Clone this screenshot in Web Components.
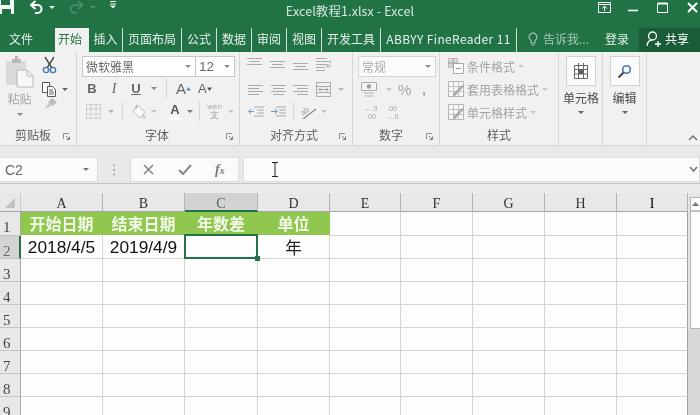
<!DOCTYPE html>
<html lang="zh"><head><meta charset="utf-8"><title>Excel教程1.xlsx - Excel</title>
<style>
html,body{margin:0;padding:0;background:#fff}
body{font-family:"Noto Sans CJK SC","Liberation Sans",sans-serif}
</style></head><body>
<x-app></x-app>
<script>
const CJK='"Noto Sans CJK SC","Liberation Sans",sans-serif';
const svg=(w,h,inner,ml=0)=>`<svg width="${w}" height="${h}" viewBox="0 0 ${w} ${h}" style="margin-left:${ml}px;flex:none;display:block">${inner}</svg>`;
const lines=(arr,c='#a9a9a9')=>arr.map(([x1,y,x2])=>`<path d="M${x1} ${y+.5}H${x2}" stroke="${c}"/>`).join('');
class Base extends HTMLElement{
  constructor(){super();this.attachShadow({mode:'open'});}
  connectedCallback(){this.shadowRoot.innerHTML=this.render();}
}
class XCaret extends Base{
  render(){const ml=this.getAttribute('ml')||0;const c=this.getAttribute('c')||'#8a8a8a';
  return `<style>:host{display:block;flex:none;margin-left:${ml}px;width:0;height:0;border:3px solid transparent;border-top:3px solid ${c};border-bottom:0}</style>`;}
}
class XApp extends Base{
  render(){return `<style>:host{display:flex;flex-direction:column;width:700px;height:415px;overflow:hidden;background:#e6e6e6;filter:blur(.3px)}</style>
  <x-titlebar></x-titlebar><x-tabbar></x-tabbar><x-ribbon></x-ribbon><x-formula></x-formula><x-sheet></x-sheet>`;}
}
class XTitlebar extends Base{
  render(){return `<style>
  :host{display:grid;grid-template-columns:1fr auto 1fr;height:26px;background:#217346;color:#dcebe2;font:12.5px/22px ${CJK};flex:none}
  .l,.r{display:flex;align-items:flex-start}
  .t{letter-spacing:.1px;color:#d5e6dc}
  </style>
  <div class="l">
    ${svg(14,15,'<path d="M-2 0H14V14H-2Z" fill="#fff" opacity=".95"/><path d="M1 0H10V5H1ZM2 9H11V14H2Z" fill="#217346"/>')}
    ${svg(15,14,'<path d="M6.5 1 2 5l4.5 4" fill="none" stroke="#fff" stroke-width="2"/><path d="M3 5H8.5a4 4 0 0 1 0 8H6" fill="none" stroke="#fff" stroke-width="2"/>',15)}
    <x-caret ml="5" c="#e8f1ec" style="margin-top:6px"></x-caret>
    ${svg(16,14,'<path d="M10 1l4.5 4L10 9" fill="none" stroke="#4f9170" stroke-width="1.6"/><path d="M13 5H7a4 4 0 0 0 0 8h2" fill="none" stroke="#4f9170" stroke-width="1.6"/>',13)}
    <x-caret ml="6" c="#4f9170" style="margin-top:6px"></x-caret>
    ${svg(7,9,'<path d="M0 1.5H6M0 4H6" stroke="#e8f1ec"/><path d="M0 5.5H6L3 8.5Z" fill="#e8f1ec"/>',14)}
  </div>
  <div class="t">Excel教程1.xlsx - Excel</div>
  <div class="r" style="justify-content:flex-end;padding-top:2px;height:14px">
    ${svg(13,11,'<path d="M.5 .5H12.5V10.5H.5Z" fill="none" stroke="#fff"/><path d="M.5 2.5H12.5" stroke="#fff"/><path d="M6.5 9V4.5M4 6.5l2.5-2.5L9 6.5" fill="none" stroke="#fff"/>',0)}
    ${svg(10,11,'<path d="M0 8.5H10" stroke="#fff" stroke-width="1.6"/>',17)}
    ${svg(11,11,'<path d="M.5 1.5H10.5V10.5H.5Z" fill="none" stroke="#fff"/><path d="M.5 1.5H10.5" stroke="#fff" stroke-width="2"/>',19)}
    ${svg(11,11,'<path d="M1 1 10 10M10 1 1 10" stroke="#fff" stroke-width="2"/>',19)}
    <span style="width:2px"></span>
  </div>`;}
}
class XTabbar extends Base{
  render(){
    const tabs=[['文件',55,0,'padding-right:13px'],['开始',34,2,'padding-right:4px'],['插入',34,1],['页面布局',59,1],['公式',35,1],['数据',35,1],['审阅',35,1],['视图',35,1],['开发工具',59,1],['ABBYY FineReader 11',136,1]];
    return `<style>
    :host{display:flex;height:26px;background:#217346;color:#e6f0ea;font:12px/22px ${CJK};flex:none;padding-top:0;box-sizing:border-box}
    .tab{box-sizing:border-box;height:24px;margin-top:2px;text-align:center;flex:none;white-space:nowrap}
    .sep{border-right:1px solid #cfe0d6}
    .on{background:#f1f1f1;color:#217346}
    .ab{letter-spacing:.35px}
    .ask{display:flex;align-items:center;height:22px;margin-top:2px;margin-left:8px;color:#a6c9b4;width:80px;flex:none}
    .login{width:34px;box-sizing:border-box;padding-right:10px;text-align:center;margin-top:2px;flex:none}
    .share{flex:1;display:flex;align-items:center;height:22px;padding-bottom:2px;margin-top:2px;background:#1b5c38;padding-left:7px;color:#fff}
    </style>
    ${tabs.map(([t,w,k,st],i)=>`<div class="tab ${k==1?'sep':''} ${k==2?'on':''} ${i==9?'ab':''}" style="width:${w}px;${st||''}">${t}</div>`).join('')}
    <div class="ask">${svg(10,15,'<path d="M5 1a4 4 0 0 0-2 7.4V11H7V8.4A4 4 0 0 0 5 1ZM3.5 13H6.5" fill="none" stroke="#a6c9b4" stroke-width="1.1"/>',3)}<span style="margin-left:5px">告诉我...</span></div>
    <div class="login">登录</div>
    <div class="share">${svg(15,16,'<circle cx="6.5" cy="5" r="4" fill="none" stroke="#fff" stroke-width="1.3"/><path d="M1 15c.5-4 2.5-6 5-6M9 13h6M12 10v6" fill="none" stroke="#fff" stroke-width="1.3"/>')}<span style="margin-left:4px">共享</span></div>`;
  }
}
class XGroup extends Base{
  render(){const w=this.getAttribute('w'),label=this.getAttribute('label')||'',d=this.hasAttribute('launcher');
  return `<style>
  :host{display:flex;flex-direction:column;width:${w}px;box-sizing:border-box;flex:none;padding-top:4px;position:relative}
  .c{height:69px;flex:none}
  .l{height:21px;display:flex;align-items:center;justify-content:center;font:12px/20px ${CJK};color:#5e5e5e;position:relative}
  .l svg{position:absolute;right:6px;top:8px}
  :host{border-right:1px solid #d6d6d6;height:93px}
  </style>
  <div class="c"><slot></slot></div>
  <div class="l" style="${this.getAttribute('lstyle')||''}">${label}${d?svg(7,7,'<path d="M.5 6V.5H6" fill="none" stroke="#8c8c8c"/><path d="M3 3 6.5 6.5M6.5 3.5V6.5H3.5" fill="none" stroke="#7a7a7a"/>'):''}</div>`;}
}
class XRibbon extends Base{
  render(){
    const dd=(w,t,size=13,extra='')=>`<div class="dd" style="width:${w}px;font-size:${size}px;${extra}"><span>${t}</span><x-caret></x-caret></div>`;
    const gridIcon=`<path d="M1.5 3.5H14.5V16.5H1.5Z" fill="#fff" stroke="#666"/><path d="M5.5 1V17M10.5 1V17M1.5 7.5H14.5M1.5 12H14.5" stroke="#666"/><path d="M6 8H10V12H6Z" fill="#55606b"/>`;
    const styleIc=`${svg(17,17,`<path d="M.5 .5H15.5V15.5H.5Z" fill="#f8f8f8" stroke="#b4b4b4"/><path d="M5.5 .5V15.5M10.5 .5V15.5M.5 5.5H15.5M.5 10.5H15.5" stroke="#c2c2c2"/><path d="M16 5 8 14l-3 2 1-4 8-8Z" fill="#a8a8a8"/>`)}`;
    return `<style>
    :host{display:flex;height:94px;background:#f1f1f1;border-bottom:1px solid #d4d4d4;box-sizing:border-box;flex:none;position:relative;font:12px ${CJK}}
    .row{display:flex;align-items:center}
    .dd{box-sizing:border-box;height:21px;background:#fff;border:1px solid #c6c6c6;display:flex;align-items:center;justify-content:space-between;padding:0 4px 0 3px;color:#6a6a6a;font-family:${CJK}}
    .bt{font:bold 13px/17px "Liberation Sans",sans-serif;color:#666;width:12px;text-align:center;flex:none}
    .vs{width:1px;height:19px;background:#d4d4d4;flex:none}
    .st{display:flex;align-items:center;height:23px;color:#a2a2a2;font-size:12px;white-space:nowrap}
    .box{width:30px;height:30px;box-sizing:border-box;background:#fbfbfb;border:1px solid #d2d2d2;display:flex;align-items:center;justify-content:center;margin:0 auto}
    .big{display:flex;flex-direction:column;align-items:center;color:#4a4a4a;font-size:12px;line-height:18px}
    .chev{position:absolute;right:2px;bottom:4px}
    .sm{font:7px/8px "Liberation Sans",sans-serif;color:#a0a0a0;text-align:center;width:16px}
    </style>
    <x-group w="77" label="剪贴板" launcher lstyle="padding-right:10px">
      <div class="row" style="align-items:flex-start">
        <div style="width:29px;margin-left:5px;display:flex;flex-direction:column;align-items:center;flex:none">
          ${svg(29,32,'<path d="M1 5H21V29H1Z" fill="#dadada"/><path d="M7 3H10V0H13V3H16V7H7Z" fill="#b8b8b8"/><path d="M12 14H22L28 20V31H12Z" fill="#f7f7f7" stroke="#b8b8b8"/><path d="M22 14V20H28" fill="none" stroke="#b8b8b8"/>')}
          <div style="color:#a6a6a6;font-size:12px;line-height:16px;margin-top:3px;white-space:nowrap">粘贴</div>
          <x-caret style="margin-top:6px"></x-caret>
        </div>
        <div style="margin-left:8px;display:flex;flex-direction:column;align-items:flex-start">
          ${svg(15,18,'<path d="M3 1 10 12M12 1 5 12" stroke="#4e4e4e" stroke-width="1.4"/><circle cx="4" cy="14" r="2.6" fill="none" stroke="#3f76ad" stroke-width="1.4"/><circle cx="11" cy="14" r="2.6" fill="none" stroke="#3f76ad" stroke-width="1.4"/>')}
          <div class="row" style="margin-top:8px">${svg(15,15,'<path d="M.5 .5H7.5V10.5H.5Z" fill="#fff" stroke="#555"/><path d="M5.5 4.5H10.5L13.5 7.5V14.5H5.5Z" fill="#fff" stroke="#555"/><path d="M7 8H11M7 10H12M7 12H12" stroke="#666"/>')}<x-caret ml="5" c="#666"></x-caret></div>
          ${svg(17,14,'<path d="M10 1l5 4-4 4-5-4Z" fill="#bbb"/><path d="M7 6 2 12l5-2 3-2Z" fill="#c8c8c8"/>','0;margin-top:8px')}
        </div>
      </div>
    </x-group>
    <x-group w="163" label="字体" launcher lstyle="padding-right:2px">
      <div class="row" style="margin-left:5px">${dd(114,'微软雅黑',12,'color:#666')}${dd(40,'12',13.5,'margin-left:-1px;font-family:Liberation Sans')}</div>
      <div class="row" style="margin:3px 0 0 9px;height:17px">
        <div class="bt">B</div><div class="bt" style="margin-left:10px;font:italic 14px/17px 'Liberation Serif',serif">I</div>
        <div class="bt" style="margin-left:10px;text-decoration:underline">U</div><x-caret ml="9"></x-caret>
        <div class="vs" style="margin-left:9px"></div>
        <div class="row" style="margin-left:9px;width:17px;color:#666;font:15px/17px 'Liberation Sans'">A${svg(5,4,'<path d="M0 3.5 2.5 0 5 3.5Z" fill="#5f8fbe"/>','0;margin-bottom:10px')}</div>
        <div class="row" style="margin-left:5px;width:17px;color:#666;font:13px/17px 'Liberation Sans'">A${svg(5,4,'<path d="M0 .5 2.5 4 5 .5Z" fill="#555"/>','0;margin-bottom:10px')}</div>
      </div>
      <div class="row" style="margin:6px 0 0 9px;height:17px">
        ${svg(15,15,'<path d="M.5 .5H14.5V14.5H.5ZM5 .5V14.5M10 .5V14.5M.5 5H14.5M.5 10H14.5" fill="none" stroke="#b2b2b2" stroke-dasharray="1 1"/>')}
        <x-caret ml="7" c="#b0b0b0"></x-caret><div class="vs" style="margin-left:8px"></div>
        ${svg(16,16,'<path d="M6 1 14 8 9 14 2 8Z" fill="#fafafa" stroke="#bdbdbd"/><path d="M6 1 5 5" stroke="#aaa"/><path d="M13 10l2 4h-4Z" fill="#c8c8c8"/>',8)}
        <x-caret ml="4" c="#c0c0c0"></x-caret>
        <div style="margin-left:12px;width:12px;text-align:center;font:bold 13px/14px 'Liberation Sans';color:#555;border-bottom:3px solid #fff;flex:none">A</div>
        <x-caret ml="6" c="#777"></x-caret><div class="vs" style="margin-left:6px"></div>
        <div style="margin-left:6px;width:17px;display:flex;flex-direction:column;align-items:center;flex:none;color:#aaa;font:8px/8px 'Liberation Sans'"><span>wén</span><span style="font-size:9px;line-height:9px;color:#999">文</span></div>
        <x-caret ml="5" c="#c0c0c0"></x-caret>
      </div>
    </x-group>
    <x-group w="113" label="对齐方式" launcher lstyle="padding-right:4px">
      <div class="row" style="margin:1px 0 0 7px;height:17px;align-items:flex-start">
        ${svg(15,12,lines([[0,1,15],[2,4,13],[0,7,15]]))}
        ${svg(15,12,lines([[0,4,15],[2,7,13],[0,10,15]]),8)}
        ${svg(15,15,lines([[0,6,15],[2,9,13],[0,12,15]]),8)}
        ${svg(15,16,lines([[0,1,11],[0,4,15],[0,7,11],[0,10,9],[0,13,9]])+'<path d="M15 4v5h-4M12.5 7 10.5 9l2 2" fill="none" stroke="#a8a8a8"/>',8)}
      </div>
      <div class="row" style="margin:8px 0 0 8px;height:15px">
        ${svg(15,12,lines([[0,1,15],[0,4,11],[0,7,15],[0,10,11]]))}
        ${svg(15,12,lines([[0,1,15],[2,4,13],[0,7,15],[2,10,13]]),8)}
        ${svg(15,12,lines([[0,1,15],[4,4,15],[0,7,15],[4,10,15]]),7)}
        ${svg(15,15,'<path d="M.5 .5H14.5V14.5H.5ZM.5 4.5H14.5M.5 10.5H14.5" fill="none" stroke="#ababab"/><path d="M3 7.5H12M5 5.5 3 7.5l2 2M10 5.5l2 2-2 2" fill="none" stroke="#9e9e9e"/>',8)}
        <x-caret ml="7" c="#b8b8b8"></x-caret>
      </div>
      <div class="row" style="margin:7px 0 0 8px;height:14px">
        ${svg(16,13,'<path d="M6 2H16M9 5H16M9 8H16M6 11H16" stroke="#a9a9a9"/><path d="M6 6.5H1M3 4 .8 6.5 3 9" fill="none" stroke="#6e97bf"/>')}
        ${svg(16,13,'<path d="M6 2H16M9 5H16M9 8H16M6 11H16" stroke="#a9a9a9"/><path d="M1 6.5H7M5 4 7.2 6.5 5 9" fill="none" stroke="#6e97bf"/>',6)}
        <div class="vs" style="margin-left:7px"></div>
        ${svg(17,15,'<path d="M3 15 16 5" stroke="#888" stroke-width="1.2"/><text x="1" y="10" font-size="8" fill="#9a9a9a" font-family="Liberation Sans" transform="rotate(-40 5 8)">ab</text>',6)}
        <x-caret ml="4" c="#c0c0c0"></x-caret>
      </div>
    </x-group>
    <x-group w="87" label="数字" launcher lstyle="padding-right:10px">
      <div class="row" style="margin-left:5px">${dd(78,'常规',12,'color:#ababab;background:#fbfbfb;border-color:#d4d4d4')}</div>
      <div class="row" style="margin:3px 0 0 8px;height:19px">
        ${svg(17,17,'<path d="M.5 1.5H15.5V9.5H.5Z" fill="#f4f4f4" stroke="#ababab"/><circle cx="8" cy="5.5" r="2.2" fill="#9e9e9e"/><path d="M3 12H13M4 15H12" stroke="#c4c4c4" stroke-width="1.5"/>')}
        <x-caret ml="8" c="#c4c4c4"></x-caret>
        <div style="margin-left:6px;font:15px/18px 'Liberation Sans';color:#a8a8a8">%</div>
        <div style="margin-left:11px;font:bold 13px/14px 'Liberation Sans';color:#a0a0a0">,</div>
      </div>
      <div class="row" style="margin:6px 0 0 10px">
        <div class="sm">←.0<br>.00</div><div class="sm" style="margin-left:5px">.00<br>→.0</div>
      </div>
    </x-group>
    <x-group w="119" label="样式">
      <div style="margin:-1px 0 0 8px">
        <div class="st">${svg(16,17,'<path d="M.5 .5H9.5V9.5H.5Z" fill="#dcdcdc" stroke="#b8b8b8"/><path d="M0 5H9M5 0V9" stroke="#9c9c9c"/><path d="M5.5 5.5H15.5V15.5H5.5Z" fill="#fbfbfb" stroke="#aaa"/><path d="M8 10.5H13" stroke="#999"/>')}<span style="margin-left:3px">条件格式</span><x-caret ml="3" c="#c8c8c8"></x-caret></div>
        <div class="st">${styleIc}<span style="margin-left:2px">套用表格格式</span><x-caret ml="3" c="#c8c8c8"></x-caret></div>
        <div class="st">${styleIc}<span style="margin-left:2px">单元格样式</span><x-caret ml="3" c="#c8c8c8"></x-caret></div>
      </div>
    </x-group>
    <x-group w="44">
      <div class="big" style="padding-left:1px"><div class="box">${svg(16,18,gridIcon)}</div><div style="margin-top:3px">单元格</div><x-caret style="margin-top:4px" c="#666"></x-caret></div>
    </x-group>
    <x-group w="44">
      <div class="big"><div class="box">${svg(15,15,'<circle cx="9.5" cy="5.5" r="3.8" fill="none" stroke="#3f76ad" stroke-width="1.6"/><path d="M6.5 8.5 1.5 13.5" stroke="#444" stroke-width="2"/>')}</div><div style="margin-top:3px">编辑</div><x-caret style="margin-top:4px" c="#666"></x-caret></div>
    </x-group>
    <div class="chev">${svg(10,7,'<path d="M1 6 5 2l4 4" fill="none" stroke="#777" stroke-width="1.5"/>')}</div>`;
  }
}
class XFormula extends Base{
  render(){return `<style>
  :host{display:flex;align-items:stretch;height:38px;box-sizing:border-box;padding:11px 0 1px;background:#e9e9e9;border-bottom:1px solid #c4c4c4;flex:none;font:14px "Liberation Sans",sans-serif}
  .b{background:#fbfbfb;box-sizing:border-box;border:1px solid #dcdcdc;display:flex;align-items:center}
  .name{width:99px;margin-left:-1px;padding:0 8px 0 5px;justify-content:space-between;color:#666}
  .dots{width:32px;display:flex;justify-content:center;align-items:center}
  .fx{width:109px}
  .in{flex:1;margin-left:4px;justify-content:space-between;padding-right:1px;position:relative}
  </style>
  <div class="b name"><span>C2</span><x-caret c="#777"></x-caret></div>
  <div class="dots">${svg(3,14,'<path d="M1 1.5v2M1 6v2M1 10.5v2" stroke="#b4b4b4" stroke-width="2"/>')}</div>
  <div class="b fx">
    ${svg(11,11,'<path d="M1 1 10 10M10 1 1 10" stroke="#888" stroke-width="1.7"/>',12)}
    ${svg(14,11,'<path d="M1 6 5 10 13 1" fill="none" stroke="#888" stroke-width="2"/>',24)}
    <span style="margin-left:23px;font:italic bold 14px 'Liberation Serif',serif;color:#777;white-space:nowrap">f<span style="font-size:10px">x</span></span>
  </div>
  <div class="b in">${svg(8,15,'<path d="M1 .5H7M1 14.5H7M4 .5V14.5" stroke="#222" fill="none"/>',27)}${svg(9,7,'<path d="M1 1l3.5 4L8 1" fill="none" stroke="#777" stroke-width="1.5"/>','0;margin-right:1px')}</div>`;}
}
class XSheet extends Base{
  render(){
    const w=[82,82,73,72,71,72,72,72,71];
    const L='ABCDEFGHI'.split('');
    const data={ '1,0':'开始日期','1,1':'结束日期','1,2':'年数差','1,3':'单位','2,0':'2018/4/5','2,1':'2019/4/9','2,3':'年' };
    let cells=`<div class="corner">${svg(11,11,'<path d="M10 0V10H0Z" fill="#c2c2c2"/>')}</div>`;
    L.forEach((l,i)=>cells+=`<div class="ch ${i==2?'sel':''}" ${i==8?'style="color:#000"':''}>${l}</div>`);
    for(let r=1;r<=9;r++){
      cells+=`<div class="rh ${r==2?'rsel':''}">${r}</div>`;
      L.forEach((_,c)=>{const t=data[r+','+c]||'';
        const g=(r==1&&c<4);const s=(r==2&&c==2);
        cells+=`<div class="c ${g?'g':''} ${s?'active':''} ${(r==2&&c<2)?'dt':''} ${(r==2&&c==3)?'y':''} ${c==8?'last':''}">${t}</div>`;});
    }
    return `<style>
    :host{display:flex;flex:1;min-height:0;overflow:hidden;padding-top:9px;background:#ebebeb;box-sizing:border-box}
    .grid{display:grid;grid-template-columns:21px ${w.map(x=>x+'px').join(' ')};grid-template-rows:19px 24px repeat(8,23px);background:#fdfdfd;flex:none;align-self:flex-start}
    .corner{background:#e8e8e8;display:flex;align-items:flex-end;justify-content:center;box-sizing:border-box;border-right:1px solid #c8c8c8;border-bottom:1px solid #a8a8a8;padding-bottom:2px}
    .ch{background:#e8e8e8;box-sizing:border-box;border-right:1px solid #b4b4b4;border-bottom:1px solid #a4a4a4;text-align:center;font:14px/22px "Liberation Serif",serif;color:#333;overflow:hidden}
    .ch.sel{background:#d3d3d3;border-bottom:2px solid #217346;color:#4a6a58}
    .rh{background:#e8e8e8;box-sizing:border-box;border-right:1px solid #a8a8a8;border-bottom:1px solid #c4c4c4;padding-left:3px;font:15px/30px "Liberation Serif",serif;color:#444;overflow:hidden}
    .rh.rsel{background:#d3d3d3;border-right:2px solid #217346;color:#666}
    .c{box-sizing:border-box;border-right:1px solid #d4d4d4;border-bottom:1px solid #d4d4d4;position:relative;overflow:visible;white-space:nowrap;text-align:center;font:16px/23px ${CJK}}
    .c.last{border-right-color:#a0a0a0}
    .c.g{background:#8fc74f;color:#f3f8e8;font-weight:700;border-right-color:#8fc74f;border-bottom-color:#fff;font-size:16px;line-height:22px}
    .c.dt{font:17.3px/23px "Liberation Sans",sans-serif;color:#111}
    .c.y{font-size:16.5px;color:#222}
    .c.active{z-index:2;border-color:transparent}
    .c.active::before{content:"";position:absolute;left:-1px;top:-2px;right:-1px;bottom:-1px;border:2px solid #217346;box-sizing:border-box}
    .c.active::after{content:"";position:absolute;right:-3px;bottom:-3px;width:5px;height:5px;background:#217346}
    .side{width:12px;flex:none;box-sizing:border-box;display:flex;flex-direction:column;height:230px;background:#e6e6e6}
    .sb{margin:4px 0 0 2px;height:132px;width:10px;background:#fdfdfd;border:1px solid #b4b4b4;border-right:0;box-sizing:border-box;display:flex;flex-direction:column;flex:none}
    .up{height:14px;border-bottom:2px solid #c2c2c2;display:flex;align-items:center;justify-content:center;flex:none;box-sizing:border-box}
    .track{flex:1;background:#d8d8d8}
    </style>
    <div class="grid">${cells}</div>
    <div class="side"><div class="sb"><div class="up">${svg(7,4,'<path d="M0 4 3.5 0 7 4Z" fill="#777"/>')}</div></div><div class="track"></div></div>`;
  }
}
customElements.define('x-caret',XCaret);
customElements.define('x-group',XGroup);
customElements.define('x-titlebar',XTitlebar);
customElements.define('x-tabbar',XTabbar);
customElements.define('x-ribbon',XRibbon);
customElements.define('x-formula',XFormula);
customElements.define('x-sheet',XSheet);
customElements.define('x-app',XApp);
</script>
</body></html>
